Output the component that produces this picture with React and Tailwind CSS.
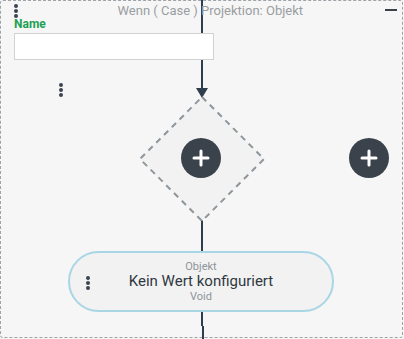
// App.jsx
// Case-node editor canvas — header with name field, decision diamond, add buttons, value pill

function Dots({ className = '' }) {
  return (
    <div className={`flex flex-col items-center gap-[1.5px] ${className}`}>
      {[0, 1, 2].map((i) => (
        <div key={i} className="w-[3.5px] h-[3.5px] rounded-full bg-[#3b4550]" />
      ))}
    </div>
  )
}

function PlusButton({ className = '' }) {
  return (
    <div className={`w-10 h-10 rounded-full bg-[#3a434c] flex items-center justify-center ${className}`}>
      <svg width="18" height="18" viewBox="0 0 18 18">
        <path d="M9 2v14M2 9h14" stroke="#fff" strokeWidth="3" strokeLinecap="round" />
      </svg>
    </div>
  )
}

export default function App() {
  return (
    <div
      className="relative w-[404px] h-[339px] overflow-hidden bg-[#f6f6f6]"
      style={{ fontFamily: 'Roboto, "Liberation Sans", sans-serif' }}
    >
      {/* Dashed panel border */}
      <div className="absolute left-0 top-0 w-[403px] h-[338px] border border-dashed border-[#9ea3a8] rounded-[3px]" />

      {/* Connector lines */}
      <div className="absolute left-[201px] top-0 w-[2px] h-[90px] bg-[#2f3d4c]" />
      <svg className="absolute left-[196px] top-[88px]" width="12" height="10" viewBox="0 0 12 10">
        <path d="M0 0h12L6 10z" fill="#2f3d4c" />
      </svg>
      <div className="absolute left-[201px] top-[220px] w-[2px] h-[31px] bg-[#2f3d4c]" />
      <div className="absolute left-[201px] top-[311px] w-[2px] h-[15px] bg-[#2f3d4c]" />
      <div className="absolute left-[202px] top-[326px] w-[2px] h-[13px] bg-[#2f3d4c]" />

      {/* Header */}
      <div className="relative px-[14px] pt-[3px]">
        <div className="flex items-start">
          <Dots className="mt-[1px]" />
          <span className="text-[13px] leading-[15px] text-[#9a9ea2] ml-[100px]">
            Wenn ( Case ) Projektion: Objekt
          </span>
          <div className="ml-auto w-[12px] h-[2px] bg-[#3a434c] mt-[6px] -mr-[7px]" />
        </div>
        <div className="text-[12px] leading-[14px] font-bold text-[#1ca055] -mt-[1px]">Name</div>
        <div className="mt-[2px] w-[200px] h-[27px] bg-white border border-[#d2d2d2]" />
      </div>

      <Dots className="absolute left-[59px] top-[83px]" />

      {/* Decision diamond */}
      <svg className="absolute left-[138px] top-[95px]" width="128" height="128" viewBox="0 0 128 128">
        <polygon
          points="64,2 126,64 64,126 2,64"
          fill="#f2f2f2"
          stroke="#8e969c"
          strokeWidth="2"
          strokeDasharray="6 5"
        />
      </svg>
      <PlusButton className="absolute left-[181px] top-[138px]" />
      <PlusButton className="absolute left-[349px] top-[138px]" />

      {/* Value pill */}
      <div className="absolute left-[68px] top-[251px] w-[266px] h-[61px] rounded-full border-2 border-[#a9d6e5] bg-[#f2f2f2] flex items-center">
        <Dots className="absolute left-[16px] top-[23px]" />
        <div className="flex-1 flex flex-col items-center">
          <span className="text-[11px] leading-[13px] text-[#8f9499]">Objekt</span>
          <span className="text-[15px] leading-[17px] text-[#30383f]">Kein Wert konfiguriert</span>
          <span className="text-[11px] leading-[13px] text-[#8f9499]">Void</span>
        </div>
      </div>
    </div>
  )
}
